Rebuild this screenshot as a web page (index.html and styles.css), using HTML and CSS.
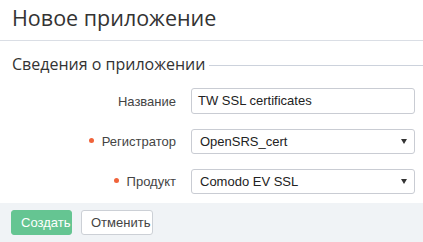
FILE: index.html
```html
<!DOCTYPE html>
<html lang="ru">
<head>
    <meta charset="UTF-8">
    <title>Новое приложение</title>
    <link rel="stylesheet" href="styles.css">
</head>
<body>
    <div class="page-header">
        <h1>Новое приложение</h1>
    </div>
    <div class="section">
        <div class="section-title">
            <span>Сведения о приложении</span>
            <div class="section-line"></div>
        </div>
        <div class="form-rows">
            <div class="form-row">
                <label class="form-label">Название</label>
                <div class="form-control input">TW SSL certificates</div>
            </div>
            <div class="form-row">
                <label class="form-label required">Регистратор</label>
                <div class="form-control select">OpenSRS_cert<span class="caret"></span></div>
            </div>
            <div class="form-row">
                <label class="form-label required">Продукт</label>
                <div class="form-control select">Comodo EV SSL<span class="caret"></span></div>
            </div>
        </div>
    </div>
    <div class="footer">
        <button class="btn btn-primary">Создать</button>
        <button class="btn btn-default">Отменить</button>
    </div>
</body>
</html>
```
FILE: styles.css
```css
body {
    margin: 0;
    font-family: 'Liberation Sans', Arial, sans-serif;
    background-color: #fff;
    color: #333;
    width: 423px;
    height: 242px;
    overflow: hidden;
}
.page-header {
    height: 40px;
    border-bottom: 1px solid #dadee5;
    padding-left: 12px;
}
h1 {
    margin: 0;
    font-family: 'Open Sans', sans-serif;
    font-weight: normal;
    font-size: 21.5px;
    line-height: 36px;
    color: #333;
}
.section {
    padding-top: 11px;
    height: 151px;
}
.section-title {
    display: flex;
    align-items: center;
    padding-left: 12px;
    font-family: 'Open Sans', sans-serif;
    font-size: 16px;
    line-height: 24px;
    color: #333;
}
.section-line {
    flex: 1;
    height: 1px;
    background-color: #ccd2dc;
    margin-left: 4px;
    margin-top: 2px;
}
.form-rows {
    margin-top: 5px;
}
.form-row {
    display: flex;
    align-items: center;
    height: 40px;
}
.form-label {
    width: 176px;
    text-align: right;
    font-size: 13px;
    color: #444;
    margin-right: 15px;
    margin-top: 1px;
}
.required::before {
    content: '';
    display: inline-block;
    width: 5px;
    height: 5px;
    border-radius: 50%;
    background-color: #f0633a;
    margin-right: 8px;
    vertical-align: middle;
    position: relative;
    top: -2px;
}
.form-control {
    box-sizing: border-box;
    width: 224px;
    height: 25px;
    border: 1px solid #c9ccd3;
    border-radius: 3px;
    font-size: 13px;
    color: #222;
    line-height: 23px;
    padding-left: 8px;
    background-color: #fff;
}
.input {
    height: 26px;
    line-height: 24px;
    padding-left: 6px;
}
.select {
    display: flex;
    justify-content: space-between;
    align-items: center;
    padding-right: 7px;
}
.caret {
    width: 0;
    height: 0;
    border-left: 3px solid transparent;
    border-right: 3px solid transparent;
    border-top: 5px solid #333;
}
.footer {
    background-color: #f0f3f6;
    height: 39px;
    padding: 7px 11px 0;
    box-sizing: border-box;
    display: flex;
    gap: 9px;
    align-items: flex-start;
}
.btn {
    height: 25px;
    font-family: 'Liberation Sans', Arial, sans-serif;
    font-size: 13px;
    border-radius: 3px;
    padding: 0 9px;
    cursor: pointer;
}
.btn-primary {
    background-color: #65c592;
    border: 1px solid #65c592;
    color: #fff;
    width: 61px;
}
.btn-default {
    background-color: #fff;
    border: 1px solid #ccd0d6;
    color: #444;
    width: 72px;
}
```
